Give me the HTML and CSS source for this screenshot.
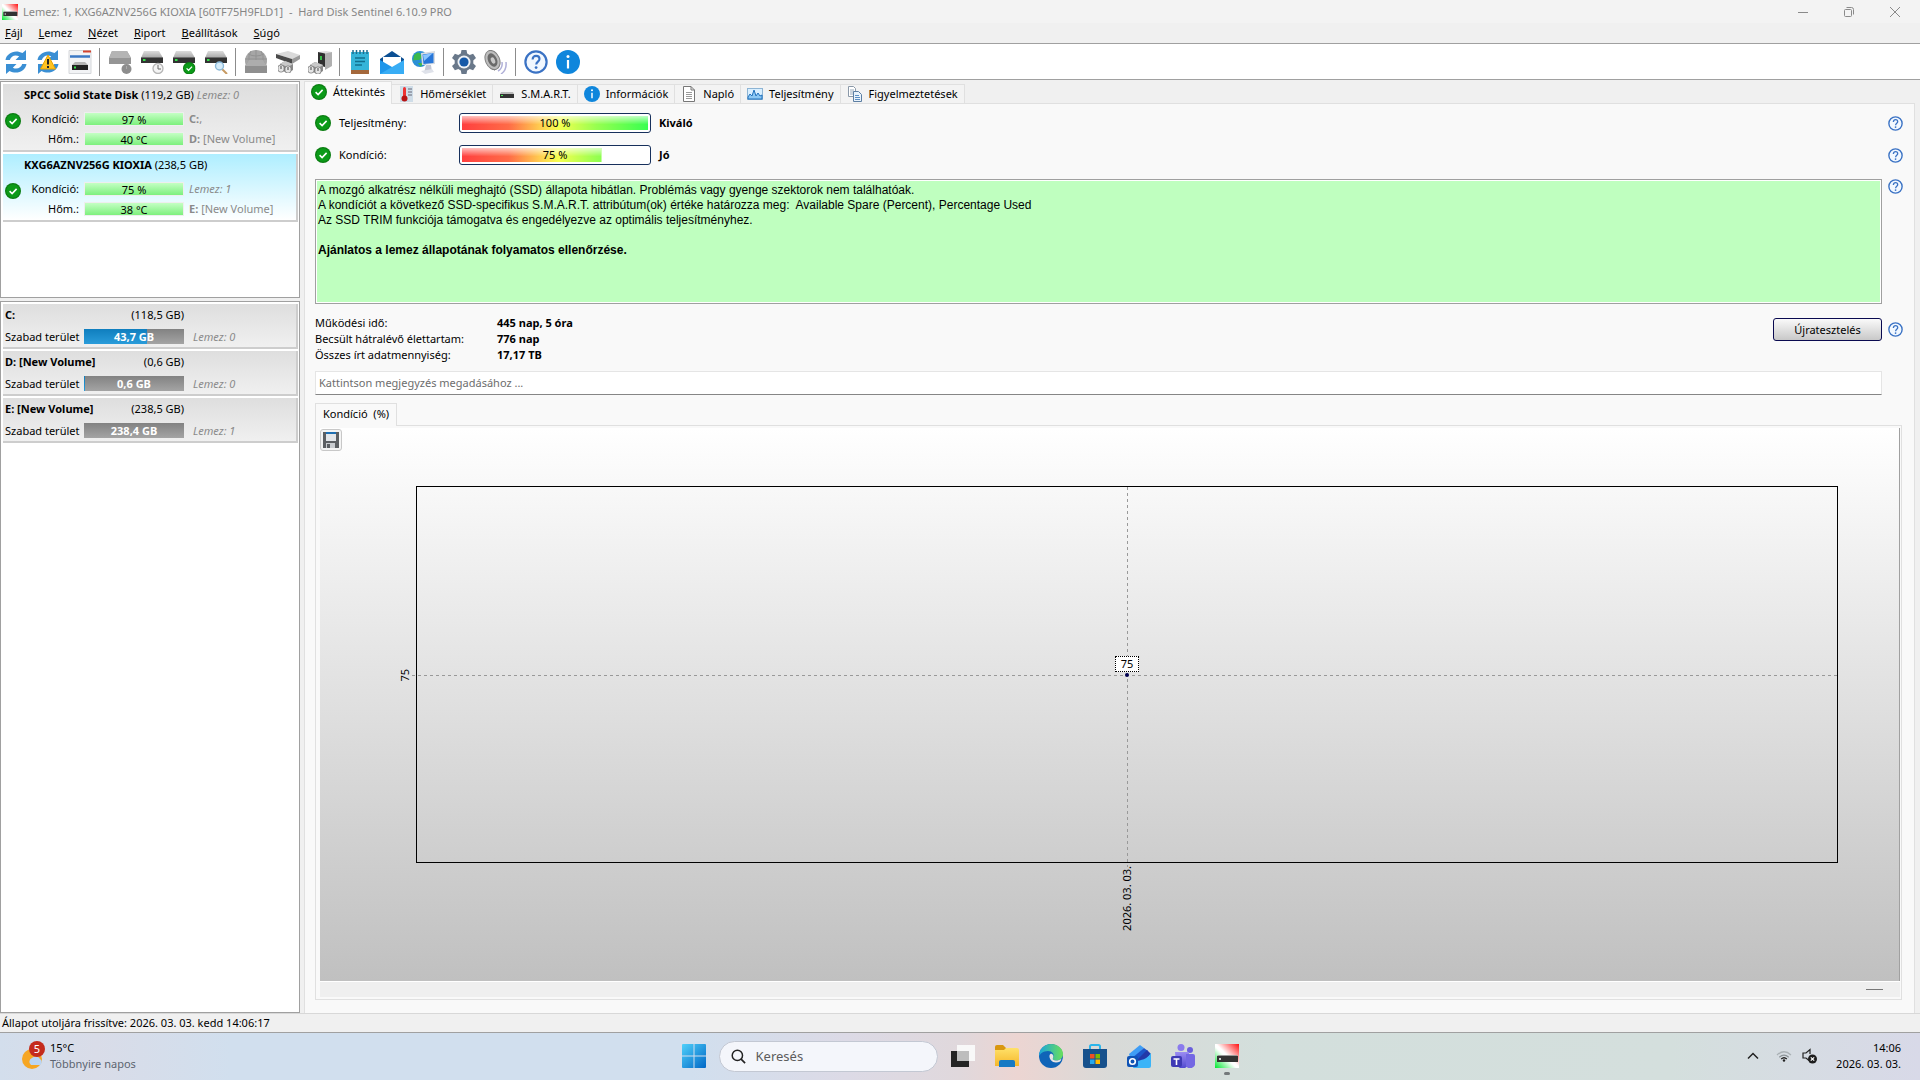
FILE: index.html
```html
<!DOCTYPE html>
<html lang="hu">
  <head>
    <meta charset="UTF-8" />
    <meta name="viewport" content="width=device-width, initial-scale=1.0" />
    <title>Hard Disk Sentinel</title>
    <link rel="stylesheet" href="styles.css">
  </head>
  <body>
    <!-- Shared icons -->
    <svg class="defs" width="0" height="0" aria-hidden="true">
      <defs>
        <linearGradient id="metal" x1="0" y1="0" x2="0" y2="1">
          <stop offset="0" stop-color="#dcdcdc" />
          <stop offset="1" stop-color="#a6a6a6" />
        </linearGradient>
        <linearGradient id="blue" x1="0" y1="0" x2="1" y2="1">
          <stop offset="0" stop-color="#4fd0fa" />
          <stop offset="1" stop-color="#0067c6" />
        </linearGradient>
        <linearGradient id="flag" x1="1" y1="0" x2="0" y2="1">
          <stop offset="0" stop-color="#ff1010" />
          <stop offset="0.48" stop-color="#fff" />
          <stop offset="0.55" stop-color="#fff" />
          <stop offset="1" stop-color="#00e830" />
        </linearGradient>
        <linearGradient id="folder" x1="0" y1="0" x2="0" y2="1">
          <stop offset="0" stop-color="#ffe169" />
          <stop offset="1" stop-color="#f5b72b" />
        </linearGradient>
        <linearGradient id="edgeTop" x1="0" y1="0" x2="1" y2="0">
          <stop offset="0" stop-color="#19a4dc" />
          <stop offset="1" stop-color="#6be05a" />
        </linearGradient>
        <linearGradient id="teams" x1="0" y1="0" x2="0" y2="1">
          <stop offset="0" stop-color="#9b8cf2" />
          <stop offset="1" stop-color="#5048cf" />
        </linearGradient>
      </defs>
      <symbol id="check" viewBox="0 0 16 16">
        <circle cx="8" cy="8" r="8" fill="#0b7d12" />
        <circle cx="8" cy="8" r="6.8" fill="#0b9a18" />
        <path d="M4.6 8.2l2.5 2.4 4.5-4.7" fill="none" stroke="#fff" stroke-width="1.6" />
      </symbol>
      <symbol id="help" viewBox="0 0 24 24">
        <circle cx="12" cy="12" r="10.6" fill="#f2f8ff" stroke="#3a72c4" stroke-width="2.2" />
        <path d="M8.6 9.4c0-2.2 1.5-3.5 3.5-3.5s3.4 1.2 3.4 3.1c0 2.6-3.3 2.7-3.3 5.6" fill="none" stroke="#3a72c4" stroke-width="2.1" />
        <circle cx="12.1" cy="17.6" r="1.4" fill="#3a72c4" />
      </symbol>
      <symbol id="info" viewBox="0 0 24 24">
        <circle cx="12" cy="12" r="12" fill="#0f86dc" />
        <path d="M12 10v8.5" stroke="#fff" stroke-width="2.2" />
        <circle cx="12" cy="6.4" r="1.5" fill="#fff" />
      </symbol>
      <symbol id="refresh" viewBox="0 0 24 24">
        <path d="M1.500 10C2.500 3 11-1 18.500 3L22 0v10H11.500l3.700-3.700C11 4.200 7 6 5.800 10z" fill="#3a8fd4" />
        <path d="M22.500 14C21.500 21 13 25 5.500 21L2 24V14h10.500l-3.700 3.700C13 19.800 17 18 18.200 14z" fill="#3a8fd4" />
      </symbol>
      <symbol id="drive" viewBox="0 0 24 24">
        <path d="M4 1h15l4 7H1z" fill="url(#metal)" />
        <rect x="1" y="7.500" width="22" height="5.500" fill="#333" />
        <rect x="3" y="9" width="2.500" height="2" fill="#35e04a" />
      </symbol>
      <symbol id="hub" viewBox="0 0 16 12">
        <path d="M2 3l5-3 8 3v6l-5 3-8-3z" fill="#8a8a8a" />
        <path d="M2 3l5-3 8 3-5 3z" fill="#c9c9c9" />
        <rect x="0" y="4" width="6" height="7" rx="2.500" fill="#e4e4e4" stroke="#777" stroke-width=".8" />
        <rect x="7" y="5" width="6" height="7" rx="2.500" fill="#e4e4e4" stroke="#777" stroke-width=".8" />
        <path d="M3 5v3M10 6v3" stroke="#444" />
      </symbol>
      <symbol id="sentinel" viewBox="0 0 24 24">
        <rect width="24" height="24" fill="url(#flag)" />
        <path d="M3 11h19l1 1H2z" fill="#999" />
        <rect x="2" y="12" width="21" height="6" fill="#333" />
        <rect x="4" y="14" width="2" height="2" fill="#ccc" />
      </symbol>
    </svg>

    <header class="titlebar">
      <svg class="titlebar__icon"><use href="#sentinel" /></svg>
      <h1 class="titlebar__text">Lemez: 1, KXG6AZNV256G KIOXIA [60TF75H9FLD1]&nbsp; -&nbsp; Hard Disk Sentinel 6.10.9 PRO</h1>
      <div class="titlebar__controls">
        <button aria-label="Kis méret"><svg viewBox="0 0 10 10"><path d="M0 5.500h10" /></svg></button>
        <button aria-label="Előző méret"><svg viewBox="0 0 10 10"><rect x=".5" y="2.500" width="7" height="7" rx="1" /><path d="M2.500.5h5a2 2 0 0 1 2 2v5" /></svg></button>
        <button aria-label="Bezárás"><svg viewBox="0 0 10 10"><path d="M0 0l10 10M10 0L0 10" /></svg></button>
      </div>
    </header>

    <nav class="menu">
      <button><u>F</u>ájl</button>
      <button><u>L</u>emez</button>
      <button><u>N</u>ézet</button>
      <button><u>R</u>iport</button>
      <button><u>B</u>eállítások</button>
      <button><u>S</u>úgó</button>
    </nav>

    <div class="toolbar">
      <button aria-label="Frissítés"><svg viewBox="0 0 24 24"><use href="#refresh" /></svg></button>
      <button aria-label="Teljes frissítés"><svg viewBox="0 0 24 24"><use href="#refresh" /><path d="M12 5l7.500 14h-15z" fill="#ffc322" stroke="#e8a200" stroke-linejoin="round" /><path d="M12 9v5.500M12 16v2" stroke="#222" stroke-width="2" /></svg></button>
      <button aria-label="Lemez ablak"><svg viewBox="0 0 24 24"><path d="M1 .5h22v23H1z" fill="#f2f3f5" stroke="#d5d7da" /><path d="M15 1.500h8" stroke="#d3422e" stroke-width="2" /><path d="M2 6.500h20" stroke="#3b78c4" stroke-width="2.500" /><path d="M7 12h10l3 3H4z" fill="#b5b5b5" /><rect x="4" y="15" width="16" height="5" fill="#222" /><rect x="6" y="16.500" width="2" height="2" fill="#35e04a" /></svg></button>
      <span class="toolbar__sep"></span>
      <button aria-label="Lemez leállítása"><svg viewBox="0 0 24 24"><path d="M4 1h15l4 7v6H1V8z" fill="#959595" /><path d="M4 1h15l4 7H1z" fill="#b4b4b4" /><circle cx="18.500" cy="19" r="5" fill="#8d8d8d" /><path d="M18.500 16v3" stroke="#aaa" /></svg></button>
      <button aria-label="Ütemezés"><svg viewBox="0 0 24 24"><use href="#drive" /><circle cx="18" cy="18.500" r="5" fill="#f4f4f4" stroke="#b5b5b5" stroke-width="1.300" /><path d="M18 15v4h3" fill="none" stroke="#666" /></svg></button>
      <button aria-label="Lemez ellenőrzése"><svg viewBox="0 0 24 24"><use href="#drive" /><use href="#check" x="11" y="12" width="12.500" height="12.500" /></svg></button>
      <button aria-label="Lemez keresése"><svg viewBox="0 0 24 24"><use href="#drive" /><path d="M18 19l5 5" stroke="#c79a62" stroke-width="2" /><circle cx="15.500" cy="16" r="4" fill="#d6edfb" stroke="#8bb8d8" stroke-width="1.400" /></svg></button>
      <span class="toolbar__sep"></span>
      <button aria-label="Hálózati lemez"><svg viewBox="0 0 24 24"><circle cx="12" cy="11" r="11" fill="#a6a6a6" /><path d="M12 0v10M4 4q8 4 16 0M1 9h22M7 1q-3 5-2 9M17 1q3 5 2 9" fill="none" stroke="#929292" /><path d="M5 10h14l4 6v7H1v-7z" fill="#8f8f8f" /><path d="M5 10h14l4 6H1z" fill="#adadad" /></svg></button>
      <button aria-label="Eszköz teszt"><svg viewBox="0 0 24 24"><path d="M0 4l12-3 12 4-8 4z" fill="#dadada" /><path d="M16 9l8-4v4l-8 5z" fill="#9a9a9a" /><path d="M0 4l16 5v5L0 8z" fill="#4a4a4a" /><use href="#hub" x="2" y="11" width="16" height="12" /></svg></button>
      <button aria-label="Felület teszt"><svg viewBox="0 0 24 24"><path d="M10 2l8-1 6 1-6 2z" fill="#dedede" /><path d="M10 2l7 1.500V17l-7-2z" fill="#2f2f2f" /><path d="M17 3.500l7-1.500v14l-7 4z" fill="#b0b0b0" /><rect x="12" y="6" width="2" height="4" fill="#35c04a" /><use href="#hub" x="0" y="12" width="16" height="12" /></svg></button>
      <span class="toolbar__sep"></span>
      <button aria-label="Riport"><svg viewBox="0 0 24 24"><path d="M3 2h18v19H3z" fill="#35b5d9" /><path d="M3 20h18v4H3z" fill="#a4683c" /><path d="M5 0v4M8.500 0v4M12 0v4M15.500 0v4M19 0v4" stroke="#1c6d8f" stroke-width="1.500" /><path d="M7 8h10M7 11.500h10M7 15h7" stroke="#12708f" stroke-width="1.500" /></svg></button>
      <button aria-label="Riport küldése"><svg viewBox="0 0 24 24"><path d="M0 9L12 1l12 8v3L12 20 0 12z" fill="#0b4f93" /><path d="M3 7h18v10H3z" fill="#fff" /><path d="M0 10l24 14H0z" fill="#1e96ea" /><path d="M24 10v14H0z" fill="#38adf5" /></svg></button>
      <button aria-label="Hálózat"><svg viewBox="0 0 24 24"><circle cx="8" cy="9" r="8" fill="#2a8fd6" /><path d="M2 5q5-5 7 0t-4 5-4 1zM6 13h5l-2 4z" fill="#3cb94c" /><path d="M9 3l14-2v13l-13 1z" fill="#d8dce2" /><path d="M10.500 4.500l11-1.500v10l-10 1z" fill="#2776d8" /><path d="M11 5l10-2-9 8z" fill="#8ac4ff" /><path d="M14 15h5l1 7-8 1z" fill="#c3c7d4" /><path d="M9 21l11-2 2 3-9 2z" fill="#dfe2ea" /></svg></button>
      <span class="toolbar__sep"></span>
      <button aria-label="Beállítások"><svg viewBox="0 0 24 24"><path d="M9.500 0h5l.7 3.500 2.500 1.500 3.400-1.200L24 8l-2.700 2.500v3L24 16l-2.900 4.200-3.400-1.200-2.500 1.500-.7 3.500h-5l-.7-3.500L6.300 19l-3.400 1.200L0 16l2.700-2.500v-3L0 8l2.900-4.200L6.300 5l2.500-1.500z" fill="#69788a" /><circle cx="12" cy="12" r="6.500" fill="#eef2f6" /><circle cx="12" cy="12" r="4.600" fill="#1559a8" /></svg></button>
      <button aria-label="Hangok"><svg viewBox="0 0 24 24"><path d="M9 2l6 5 1 9-6 5z" fill="#8b8b8b" /><ellipse cx="8.500" cy="10" rx="7" ry="10" transform="rotate(-24 8.500 10)" fill="#bdbdbd" stroke="#808080" /><ellipse cx="8.500" cy="10" rx="4.500" ry="7" transform="rotate(-24 8.500 10)" fill="#6a6a6a" /><ellipse cx="9" cy="10.500" rx="2" ry="3.300" transform="rotate(-24 9 10.500)" fill="#c9c9c9" /><path d="M14 21q5-3 4-9M17 24q6-4 5-12" fill="none" stroke="#b0b0d8" stroke-width="1.500" /></svg></button>
      <span class="toolbar__sep"></span>
      <button aria-label="Súgó"><svg><use href="#help" /></svg></button>
      <button aria-label="Névjegy"><svg><use href="#info" /></svg></button>
    </div>

    <div class="workspace">
      <aside class="sidebar">
        <section class="list list--disks">
          <article class="disk">
            <h2 class="disk__title"><b>SPCC Solid State Disk</b> (119,2 GB) <i>Lemez: 0</i></h2>
            <svg class="disk__state"><use href="#check" /></svg>
            <span class="disk__label">Kondíció:</span>
            <span class="bar">97 %</span>
            <span class="disk__note"><b>C:</b>,</span>
            <span class="disk__label">Hőm.:</span>
            <span class="bar">40 °C</span>
            <span class="disk__note"><b>D:</b> [New Volume]</span>
          </article>
          <article class="disk disk--selected">
            <h2 class="disk__title"><b>KXG6AZNV256G KIOXIA</b> (238,5 GB)</h2>
            <svg class="disk__state"><use href="#check" /></svg>
            <span class="disk__label">Kondíció:</span>
            <span class="bar">75 %</span>
            <span class="disk__note"><i>Lemez: 1</i></span>
            <span class="disk__label">Hőm.:</span>
            <span class="bar">38 °C</span>
            <span class="disk__note"><b>E:</b> [New Volume]</span>
          </article>
        </section>

        <section class="list list--volumes">
          <article class="volume">
            <h2 class="volume__title"><b>C:</b><span>(118,5 GB)</span></h2>
            <span class="volume__label">Szabad terület</span>
            <span class="space"><span class="space__fill" style="width: 63%"></span><span class="space__text">43,7 GB</span></span>
            <i class="volume__note">Lemez: 0</i>
          </article>
          <article class="volume">
            <h2 class="volume__title"><b>D: [New Volume]</b><span>(0,6 GB)</span></h2>
            <span class="volume__label">Szabad terület</span>
            <span class="space"><span class="space__fill" style="width: 1%"></span><span class="space__text">0,6 GB</span></span>
            <i class="volume__note">Lemez: 0</i>
          </article>
          <article class="volume">
            <h2 class="volume__title"><b>E: [New Volume]</b><span>(238,5 GB)</span></h2>
            <span class="volume__label">Szabad terület</span>
            <span class="space"><span class="space__fill" style="width: 0%"></span><span class="space__text">238,4 GB</span></span>
            <i class="volume__note">Lemez: 1</i>
          </article>
        </section>
      </aside>

      <main class="main">
        <div class="tabs" role="tablist">
          <button class="tab tab--active" role="tab"><svg><use href="#check" /></svg>Áttekintés</button>
          <button class="tab" role="tab"><svg viewBox="0 0 16 16"><rect x="2" width="13" height="16" fill="#cfdde8" /><path d="M10 3h4M10 6h4M10 9h4" stroke="#667" /><rect x="5" y="1" width="3" height="11" rx="1.500" fill="#e33" /><circle cx="6.500" cy="12.500" r="3" fill="#b81414" /></svg>Hőmérséklet</button>
          <button class="tab" role="tab"><svg viewBox="0 0 16 16"><path d="M2 6h12l1 2H1z" fill="#bbb" /><rect x="1" y="8" width="14" height="4" fill="#333" /><rect x="2" y="9" width="2" height="1" fill="#4e5" /></svg>S.M.A.R.T.</button>
          <button class="tab" role="tab"><svg><use href="#info" /></svg>Információk</button>
          <button class="tab" role="tab"><svg viewBox="0 0 16 16"><path d="M2.500.5h7.500l3.500 3.500v11.500h-11zM10 .5V4h3.500" fill="#fff" stroke="#777" /><path d="M5 6.500h6M5 8.500h6M5 10.500h6M5 12.500h6" stroke="#999" /></svg>Napló</button>
          <button class="tab" role="tab"><svg viewBox="0 0 16 16"><rect x=".5" y="2.500" width="15" height="11" fill="#d9efff" stroke="#8db4d4" /><path d="M1 11l2-3 2 2 2-6 2 6 2-3 2 3 2-1v4H1z" fill="#8cc8f4" stroke="#2272bd" /></svg>Teljesítmény</button>
          <button class="tab" role="tab"><svg viewBox="0 0 16 16"><path d="M1.500.5h5l2 2v8h-7z" fill="#fff" stroke="#8a98a8" /><path d="M3 4h4M3 6h4M3 8h3" stroke="#9ab" /><path d="M6.500 5.500h5l3 3v7h-8z" fill="#e9f3fc" stroke="#5d7fa3" /><path d="M8 9.500h4M8 11.500h5M8 13.500h5" stroke="#5d8fc3" /></svg>Figyelmeztetések</button>
        </div>

        <div class="pane">
          <div class="rating">
            <svg class="rating__state"><use href="#check" /></svg>
            <span class="rating__label">Teljesítmény:</span>
            <div class="meter"><div class="meter__fill"></div><span class="meter__text">100 %</span></div>
            <b class="rating__value">Kiváló</b>
            <button class="help" aria-label="Súgó: teljesítmény"><svg><use href="#help" /></svg></button>
          </div>
          <div class="rating">
            <svg class="rating__state"><use href="#check" /></svg>
            <span class="rating__label">Kondíció:</span>
            <div class="meter"><div class="meter__fill" style="clip-path: inset(0 25% 0 0)"></div><span class="meter__text">75 %</span></div>
            <b class="rating__value">Jó</b>
            <button class="help" aria-label="Súgó: kondíció"><svg><use href="#help" /></svg></button>
          </div>

          <div class="report">
            <div class="report__text">
              <p>A mozgó alkatrész nélküli meghajtó (SSD) állapota hibátlan. Problémás vagy gyenge szektorok nem találhatóak.</p>
              <p>A kondíciót a következő SSD-specifikus S.M.A.R.T. attribútum(ok) értéke határozza meg:&nbsp; Available Spare (Percent), Percentage Used</p>
              <p>Az SSD TRIM funkciója támogatva és engedélyezve az optimális teljesítményhez.</p>
              <p class="report__advice">Ajánlatos a lemez állapotának folyamatos ellenőrzése.</p>
            </div>
            <button class="help" aria-label="Súgó: állapot"><svg><use href="#help" /></svg></button>
          </div>

          <div class="stats">
            <dl class="stats__list">
              <dt>Működési idő:</dt><dd>445 nap, 5 óra</dd>
              <dt>Becsült hátralévő élettartam:</dt><dd>776 nap</dd>
              <dt>Összes írt adatmennyiség:</dt><dd>17,17 TB</dd>
            </dl>
            <button class="stats__retest">Újratesztelés</button>
            <button class="help" aria-label="Súgó: újratesztelés"><svg><use href="#help" /></svg></button>
          </div>

          <input class="comment" type="text" placeholder="Kattintson megjegyzés megadásához ..." aria-label="Megjegyzés" />

          <div class="graph-tabs"><button class="graph-tab">Kondíció&nbsp; (%)</button></div>
          <div class="graph">
            <div class="chart">
              <button class="chart__save" aria-label="Mentés"><svg viewBox="0 0 16 16"><path d="M0 0h16v16H0z" fill="#5c5f63" /><rect x="3" width="10" height="9" fill="#e3e6ea" /><path d="M3 0h10v2H3z" fill="#1f6fb2" /><rect x="3" y="11" width="9" height="5" fill="#c9ccd0" /><rect x="4" y="12" width="3" height="4" fill="#5c5f63" /></svg></button>
              <div class="plot">
                <span class="plot__row"></span>
                <span class="plot__column"></span>
                <span class="plot__point"></span>
                <span class="plot__value">75</span>
                <span class="plot__y">75</span>
                <span class="plot__x">2026. 03. 03.</span>
              </div>
            </div>
            <div class="graph__footer"><span></span></div>
          </div>
        </div>
      </main>
    </div>

    <div class="status">Állapot utoljára frissítve: 2026. 03. 03. kedd 14:06:17</div>

    <footer class="taskbar">
      <button class="weather">
        <svg viewBox="0 0 28 30"><circle cx="12" cy="18" r="10" fill="#f6a623" /><path d="M11 24a4 4 0 0 1 1-7 5 5 0 0 1 8 1 3.500 3.500 0 0 1 0 6z" fill="#b9d5f5" /><circle cx="17" cy="8" r="8" fill="#c42b1c" /><text x="17" y="12" text-anchor="middle" class="weather__badge">5</text></svg>
        <span class="weather__text"><span>15°C</span><span class="weather__sky">Többnyire napos</span></span>
      </button>

      <div class="taskbar__apps">
        <button class="app" aria-label="Start"><svg viewBox="0 0 24 24"><path d="M1 0h10.500v11.500H0V1a1 1 0 0 1 1-1zM12.500 0H23a1 1 0 0 1 1 1v10.500H12.500zM0 12.500h11.500V24H1a1 1 0 0 1-1-1zM12.500 12.500H24V23a1 1 0 0 1-1 1H12.500z" fill="url(#blue)" /></svg></button>
        <label class="search">
          <svg viewBox="0 0 16 16"><circle cx="6.800" cy="6.800" r="5.500" fill="none" stroke="#222" stroke-width="1.600" /><path d="M10.800 10.800L15 15" stroke="#222" stroke-width="1.800" /></svg>
          <input type="text" placeholder="Keresés" aria-label="Keresés" />
        </label>
        <button class="app" aria-label="Feladatnézet"><svg viewBox="0 0 24 24"><rect x="6" y="1" width="18" height="16" fill="#f8f8f8" /><rect y="7" width="18" height="16" fill="#242424" /><rect x="6" y="7" width="12" height="10" fill="#bdbdbd" /></svg></button>
        <button class="app" aria-label="Fájlkezelő"><svg viewBox="0 0 24 24"><path d="M0 3a2 2 0 0 1 2-2h6l3 3v4H0z" fill="#d9970f" /><path d="M0 6h9l2-2h11a2 2 0 0 1 2 2v16H0z" fill="url(#folder)" /><path d="M4 23v-5a2 2 0 0 1 2-2h12a2 2 0 0 1 2 2v5z" fill="#167ac4" /></svg></button>
        <button class="app" aria-label="Edge"><svg viewBox="0 0 24 24"><circle cx="12" cy="12" r="12" fill="#0f64b8" /><path d="M0 12C0 5 5.500 0 12 0s12 4.500 12 10c0 4-3 6.500-7 6.500-2.500 0-4-1-3-2.500 2-4-1-7-5-7-5 0-8 3-9 5z" fill="url(#edgeTop)" /><path d="M14 14c-1 1.500.5 2.500 3 2.500 2 0 4-.5 5.500-2-.5 3-2.500 4-5.500 4-4 0-7-3.500-6.500-7 .3-1.500 1.500-2 2.500-1.500 1.500.5 1.700 2.500 1 4z" fill="#e7e4e4" /></svg></button>
        <button class="app" aria-label="Áruház"><svg viewBox="0 0 24 24"><path d="M7 6V2.500A1.500 1.500 0 0 1 8.500 1h7A1.500 1.500 0 0 1 17 2.500V6" fill="none" stroke="#2cb5ea" stroke-width="2" /><path d="M0 5h24v16a3 3 0 0 1-3 3H3a3 3 0 0 1-3-3z" fill="#17518c" /><path d="M7 10h4.500v4.500H7z" fill="#f25022" /><path d="M12.500 10H17v4.500h-4.500z" fill="#7fba00" /><path d="M7 15.500h4.500V20H7z" fill="#25a9ef" /><path d="M12.500 15.500H17V20h-4.500z" fill="#ffb900" /></svg></button>
        <button class="app" aria-label="Outlook"><svg viewBox="0 0 24 24"><path d="M2 10L13 1l4 3-13 12z" fill="#3f9df5" /><path d="M5 14L17 4l4 3-12 12z" fill="#1b55c9" /><path d="M10 16L20 6l4 4-8 9z" fill="#2238a8" /><path d="M24 9v13a2 2 0 0 1-2 2H6q2-7 8-8 6-1 10-7z" fill="#3bb4f8" /><rect y="12" width="11" height="11" rx="2" fill="#0f53b5" /><circle cx="5.500" cy="17.500" r="2.800" fill="none" stroke="#fff" stroke-width="1.600" /></svg></button>
        <button class="app" aria-label="Teams"><svg viewBox="0 0 24 24"><circle cx="10" cy="3.500" r="3.500" fill="#8a7bed" /><circle cx="19" cy="6" r="3" fill="#6a5fdc" /><path d="M4 8h14v10a6 6 0 0 1-13 0z" fill="url(#teams)" /><path d="M15 10h7a2 2 0 0 1 2 2v6a5 5 0 0 1-9 4z" fill="#7468e3" /><rect y="12" width="11" height="11" rx="2" fill="#3f3ab5" /><path d="M2.500 15h6M5.500 15v6" stroke="#fff" stroke-width="1.600" /></svg></button>
        <button class="app app--running" aria-label="Hard Disk Sentinel"><svg><use href="#sentinel" /></svg></button>
      </div>

      <div class="tray">
        <button class="tray__more" aria-label="Rejtett ikonok"><svg viewBox="0 0 12 12"><path d="M1 8.500l5-5 5 5" fill="none" stroke="#222" stroke-width="1.500" /></svg></button>
        <svg class="tray__icon" viewBox="0 0 16 16"><path d="M1 7q7-6.500 14 0" fill="none" stroke="#aab1b5" stroke-width="1.200" /><path d="M3.300 9.300q4.700-4.300 9.400 0" fill="none" stroke="#8a9296" stroke-width="1.200" /><path d="M5.200 11q2.800-2.600 5.600 0" fill="none" stroke="#222" stroke-width="1.300" /><circle cx="8" cy="12.500" r="1.200" fill="#222" /></svg>
        <svg class="tray__icon" viewBox="0 0 16 16"><path d="M8 12.500L5 10H2V5h3l4-3.500V6" fill="none" stroke="#222" stroke-width="1.200" /><circle cx="11.500" cy="11" r="4.500" fill="#1d1d1d" /><path d="M9.800 9.300l3.400 3.400M13.200 9.300l-3.400 3.400" stroke="#fff" stroke-width="1.200" /></svg>
        <time class="tray__clock">14:06<br />2026. 03. 03.</time>
      </div>
    </footer>
  </body>
</html>
```
FILE: styles.css
```css
/* Global styles */
* {
  padding: 0;
  margin: 0;
  box-sizing: border-box;
}

:root {
  --face: #f0f0f0;
  --pane: #f9f9f9;
  --line: #a0a0a0;
  --softLine: #e0e0e0;
  --mutedText: #8a8a8a;
}

body {
  height: 100vh;
  display: flex;
  flex-direction: column;
  overflow: hidden;
  background-color: var(--face);
  font: 11px/16px "Noto Sans", "Open Sans", sans-serif;
  color: #000;
}

button,
input {
  font: inherit;
  color: inherit;
  border: 0;
  background: none;
}

svg {
  display: block;
  flex: none;
}

.defs {
  position: absolute;
}

h1,
h2 {
  font-size: inherit;
  font-weight: 400;
}

/* Title bar and menu */
.titlebar {
  height: 23px;
  display: flex;
  align-items: center;
  gap: 5px;
  padding: 0 2px;
  background-color: #f3f3f3;
}

.titlebar__icon {
  width: 16px;
  height: 16px;
}

.titlebar__text {
  flex: 1;
  color: #868686;
}

.titlebar__controls {
  display: flex;
}

.titlebar__controls button {
  width: 46px;
  height: 22px;
  display: grid;
  place-items: center;
}

.titlebar__controls svg {
  width: 10px;
  height: 10px;
  overflow: visible;
  fill: none;
  stroke: #8a8a8a;
}

.menu {
  height: 21px;
  display: flex;
  align-items: center;
  gap: 16px;
  padding-left: 5px;
  border-bottom: 1px solid var(--line);
}

.toolbar {
  height: 36px;
  display: flex;
  align-items: center;
  background-color: #fff;
  border-bottom: 1px solid var(--line);
}

.toolbar button {
  width: 32px;
  height: 34px;
  display: grid;
  place-items: center;
}

.toolbar svg {
  width: 24px;
  height: 24px;
}

.toolbar__sep {
  width: 1px;
  height: 28px;
  margin: 0 4px 0 3px;
  background-color: #8c8c8c;
}

/* Left side */
.workspace {
  flex: 1;
  min-height: 0;
  display: flex;
  gap: 4px;
  padding: 1px 5px 0 0;
}

.sidebar {
  width: 300px;
  flex: none;
  display: flex;
  flex-direction: column;
  gap: 3px;
}

.list {
  display: flex;
  flex-direction: column;
  gap: 2px;
  padding: 2px 1px 2px 2px;
  background-color: #fff;
  border: 1px solid var(--line);
}

.list--disks {
  height: 217px;
}

.list--volumes {
  flex: 1;
}

.disk,
.volume {
  background: linear-gradient(#dedede, #f0f0f0);
  border-right: 2px solid #cdcdcd;
  border-bottom: 2px solid #cdcdcd;
}

.disk {
  height: 68px;
  display: grid;
  grid-template-columns: 16px 53px 100px 1fr;
  grid-template-rows: 25px 20px 20px;
  column-gap: 5px;
  align-items: center;
  padding-left: 2px;
}

.disk--selected {
  background: linear-gradient(#aeeeff, #fff);
}

.disk__title {
  grid-column: 1 / -1;
  align-self: start;
  padding-left: 19px;
  line-height: 22px;
}

.disk__title i,
.disk__note,
.volume__note {
  color: var(--mutedText);
}

.disk__state {
  grid-row: 2 / 4;
  align-self: start;
  width: 16px;
  height: 16px;
  margin-top: 4px;
}

.disk__label {
  text-align: right;
}

.bar {
  height: 14px;
  line-height: 14px;
  text-align: center;
  background: linear-gradient(#c4ffc4, #7df07d);
  border: 1px solid #eee;
}

.volume {
  height: 45px;
  display: grid;
  grid-template-columns: 75px 100px 1fr;
  grid-template-rows: 22px 21px;
  column-gap: 4px;
  align-items: center;
  padding-left: 2px;
}

.volume__title {
  grid-column: 1 / 3;
  display: flex;
  justify-content: space-between;
}

.volume__title + .volume__label {
  grid-column: 1;
}

.volume__note {
  padding-left: 5px;
}

.space {
  position: relative;
  height: 15px;
  line-height: 15px;
  text-align: center;
  font-weight: 700;
  color: #fff;
  background: linear-gradient(#828282, #a4a4a4);
}

.space__fill {
  position: absolute;
  inset: 0 auto 0 0;
  background: linear-gradient(#0f7ebe, #2a9cda);
}

.space__text {
  position: relative;
}

/* Main area */
.main {
  flex: 1;
  min-width: 0;
  display: flex;
  flex-direction: column;
}

.tabs {
  height: 22px;
  display: flex;
  align-items: flex-end;
}

.tab {
  height: 19px;
  display: flex;
  align-items: center;
  gap: 6px;
  padding: 0 6px;
  background-color: #f3f3f3;
  border: 1px solid var(--softLine);
  border-width: 1px 1px 0 0;
}

.tab svg {
  width: 16px;
  height: 16px;
}

.tab--active {
  position: relative;
  height: 23px;
  margin-bottom: -1px;
  padding-bottom: 2px;
  background-color: var(--pane);
  border-left-width: 1px;
}

.pane {
  flex: 1;
  min-height: 0;
  display: flex;
  flex-direction: column;
  padding: 3px 11px 13px 10px;
  background-color: var(--pane);
  border: 1px solid var(--softLine);
  border-bottom: 0;
}

.help {
  width: 15px;
  height: 15px;
  flex: none;
  margin-left: 6px;
}

.help svg {
  width: 15px;
  height: 15px;
}

.rating {
  height: 32px;
  display: flex;
  align-items: center;
}

.rating__state {
  width: 16px;
  height: 16px;
  margin-right: 8px;
}

.rating__label {
  width: 120px;
}

.meter {
  position: relative;
  width: 192px;
  height: 20px;
  padding: 2px;
  background-color: #fff;
  border: 1px solid #17305c;
  border-radius: 3px;
}

.meter__fill {
  height: 14px;
  background: linear-gradient(rgba(255, 255, 255, 0.7), rgba(255, 255, 255, 0.1) 60%, rgba(255, 255, 255, 0.1)),
    linear-gradient(90deg, #ff2a2a, #ff5a32 25%, #ffc83c 42%, #f4ff3c 52%, #8cff3c 72%, #22ff3c);
}

.meter__text {
  position: absolute;
  inset: 0;
  line-height: 18px;
  text-align: center;
}

.rating__value {
  flex: 1;
  padding-left: 8px;
}

.report {
  display: flex;
  margin-top: 8px;
}

.report__text {
  flex: 1;
  height: 125px;
  padding: 3px 2px;
  font: 12px/15px "Liberation Sans", Arial, sans-serif;
  background-color: #bfffbf;
  border: 1px solid var(--line);
  box-shadow: inset 0 0 0 1px #fff;
}

.report__advice {
  margin-top: 15px;
  font-weight: 700;
}

.stats {
  display: flex;
  align-items: flex-start;
  margin-top: 11px;
}

.stats__list {
  flex: 1;
  display: grid;
  grid-template-columns: 182px 1fr;
}

.stats dd {
  font-weight: 700;
}

.stats__retest {
  width: 109px;
  height: 23px;
  margin-top: 3px;
  background: linear-gradient(#fafafa, #c8c8c8);
  border: 1px solid #0a0a50;
  border-radius: 3px;
}

.stats .help {
  margin-top: 7px;
}

.comment {
  height: 24px;
  margin: 8px 21px 0 0;
  padding: 0 3px 2px;
  background-color: #fff;
  border: 1px solid #e5e5e5;
  border-bottom-color: #868686;
}

.comment::placeholder {
  color: #6d6d6d;
  opacity: 1;
}

.graph-tabs {
  display: flex;
  margin-top: 8px;
}

.graph-tab {
  position: relative;
  height: 23px;
  margin-bottom: -1px;
  padding: 0 7px 2px;
  background-color: var(--pane);
  border: 1px solid var(--softLine);
  border-bottom: 0;
}

.graph {
  flex: 1;
  min-height: 0;
  display: flex;
  flex-direction: column;
  margin-right: 1px;
  padding: 2px 1px 2px 4px;
  border: 1px solid var(--softLine);
}

.chart {
  flex: 1;
  display: flex;
  flex-direction: column;
  padding: 1px 61px 118px 0;
  background: linear-gradient(#fff, #c0c0c0);
  border-right: 1px solid var(--line);
}

.chart__save {
  width: 22px;
  height: 22px;
  display: grid;
  place-items: center;
  background-color: #f4f4f4;
  border: 1px solid #c8c8c8;
  border-radius: 3px;
}

.chart__save svg {
  width: 16px;
  height: 16px;
}

.plot {
  flex: 1;
  position: relative;
  margin: 35px 0 0 96px;
  border: 1px solid #000;
}

.plot__row,
.plot__column {
  position: absolute;
}

.plot__row {
  top: 50%;
  left: -5px;
  right: 0;
  height: 1px;
  background: repeating-linear-gradient(90deg, #999 0 3px, transparent 3px 6px);
}

.plot__column {
  left: 50%;
  top: 0;
  bottom: -5px;
  width: 1px;
  background: repeating-linear-gradient(#999 0 3px, transparent 3px 6px);
}

.plot__point {
  position: absolute;
  top: 50%;
  left: 50%;
  width: 4px;
  height: 4px;
  margin: -2px;
  border-radius: 50%;
  background-color: #000050;
}

.plot__value {
  position: absolute;
  bottom: 50%;
  left: 50%;
  width: 24px;
  height: 16px;
  margin: 0 0 3px -12px;
  line-height: 14px;
  text-align: center;
  background-color: #fff;
  border: 1px dotted #000;
}

.plot__y,
.plot__x {
  position: absolute;
  line-height: 12px;
  white-space: nowrap;
  writing-mode: vertical-rl;
  rotate: 180deg;
}

.plot__y {
  top: calc(50% - 6px);
  left: -18px;
}

.plot__x {
  top: calc(100% + 4px);
  left: calc(50% - 6px);
}

.graph__footer {
  height: 16px;
  display: flex;
  align-items: center;
  justify-content: flex-end;
  padding-right: 17px;
  background-color: #efefef;
  border-top: 1px solid #fff;
}

.graph__footer span {
  width: 17px;
  height: 1px;
  background-color: #777;
}

.status {
  height: 20px;
  padding-left: 2px;
  line-height: 18px;
  border-top: 1px solid #d8d8d8;
  border-bottom: 1px solid var(--line);
}

/* Taskbar */
.taskbar {
  height: 47px;
  display: grid;
  grid-template-columns: 1fr auto 1fr;
  align-items: center;
  padding-bottom: 1px;
  background: linear-gradient(90deg, #d3deec, #d9dce8 5%, #d1dfee 12%, #d1dfee 36%, #dcdae6 44%, #e0d8dc 50%, #ecd5d2 53%, #d8dad8 58%, #d3dfdc 66%, #d4dfdd 87%, #d8d9e8);
}

.weather {
  display: flex;
  align-items: center;
  gap: 2px;
  padding-left: 20px;
  text-align: left;
}

.weather svg {
  width: 28px;
  height: 30px;
}

.weather__badge {
  font-size: 11px;
  fill: #fff;
}

.weather__text {
  display: flex;
  flex-direction: column;
}

.weather__sky {
  color: #5c6470;
}

.taskbar__apps {
  display: flex;
  align-items: center;
}

.app {
  position: relative;
  width: 44px;
  height: 46px;
  display: grid;
  place-items: center;
}

.app svg {
  width: 24px;
  height: 24px;
}

.app--running::after {
  content: "";
  position: absolute;
  bottom: 4px;
  left: 19px;
  width: 6px;
  height: 3px;
  border-radius: 2px;
  background-color: #74797b;
}

.search {
  width: 219px;
  height: 31px;
  display: flex;
  align-items: center;
  gap: 10px;
  margin: 0 3px;
  padding: 0 11px;
  background-color: #f4f6fb;
  border: 1px solid #c3c8d3;
  border-radius: 16px;
  font-size: 13px;
}

.search svg {
  width: 15px;
  height: 15px;
}

.search input {
  min-width: 0;
  flex: 1;
}

.search input::placeholder {
  color: #5c5c5c;
  opacity: 1;
}

.tray {
  display: flex;
  align-items: center;
  justify-content: flex-end;
  gap: 9px;
  padding-right: 19px;
}

.tray__more {
  margin-right: 8px;
}

.tray__more svg {
  width: 12px;
  height: 12px;
}

.tray__icon {
  width: 16px;
  height: 16px;
}

.tray__clock {
  width: 75px;
  text-align: right;
}
```
